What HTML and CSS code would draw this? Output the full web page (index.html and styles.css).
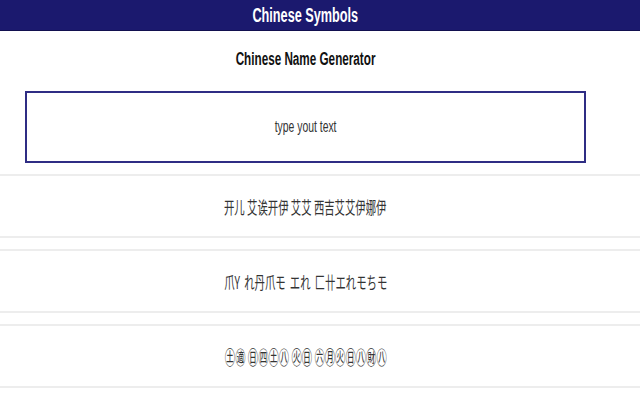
FILE: index.html
```html
<!DOCTYPE html>
<html lang="en">
<head>
<meta charset="utf-8">
<title>Chinese Symbols</title>
<link rel="stylesheet" href="styles.css">
</head>
<body>
<header class="topbar"><span class="squash">Chinese Symbols</span></header>
<main class="page">
  <h1 class="title"><span class="squash">Chinese Name Generator</span></h1>
  <div class="entry"><span class="squash placeholder">type yout text</span></div>
  <section class="results">
    <div class="result"><span class="squash narrow">开儿 艾诶开伊 艾艾 西吉艾艾伊娜伊</span></div>
    <div class="result"><span class="squash narrow spaced">爪Y れ丹爪モ エれ 匚卄エれモちモ</span></div>
    <div class="result circled"><span class="squash narrower">㊏㊜ ㊐㊃㊏㊇ ㊋㊐ ㊅㊊㊋㊐㊇㊖㊇</span></div>
  </section>
</main>
</body>
</html>
```
FILE: styles.css
```css
html, body {
  margin: 0;
  padding: 0;
  background: #ffffff;
}
body {
  font-family: "Liberation Sans", Arial, "Noto Sans CJK SC", sans-serif;
  color: #222;
}
.squash {
  display: inline-block;
  transform: scaleX(0.65);
  transform-origin: center;
  white-space: nowrap;
}
.squash.narrow {
  transform: scaleX(0.61);
}
.squash.narrower {
  transform: scaleX(0.53);
}
.squash.spaced {
  word-spacing: 3px;
}
.topbar {
  height: 30px;
  padding-right: 29px;
  background: #1b196e;
  border-bottom: 1px solid #12104f;
  color: #ffffff;
  font-weight: bold;
  font-size: 19.5px;
  line-height: 30px;
  text-align: center;
}
.page {
  display: flex;
  flex-direction: column;
}
.title {
  margin: 18px 0 0;
  padding-right: 29px;
  height: 42px;
  font-size: 18px;
  line-height: 20px;
  font-weight: bold;
  color: #111;
  text-align: center;
}
.entry {
  margin-left: 25px;
  width: 557px;
  height: 68px;
  border: 2px solid #2f2d84;
  display: flex;
  align-items: center;
  justify-content: center;
  font-size: 16px;
  color: #333;
}
.results {
  margin-top: 11px;
  display: flex;
  flex-direction: column;
  gap: 11px;
}
.result {
  height: 60px;
  padding-right: 29px;
  border-top: 2px solid #ededed;
  border-bottom: 2px solid #ededed;
  display: flex;
  align-items: center;
  justify-content: center;
  font-family: "Noto Sans CJK SC", "Noto Sans CJK JP", sans-serif;
  font-size: 17px;
  color: #333;
}
.result.circled {
  font-size: 19.5px;
}
```
